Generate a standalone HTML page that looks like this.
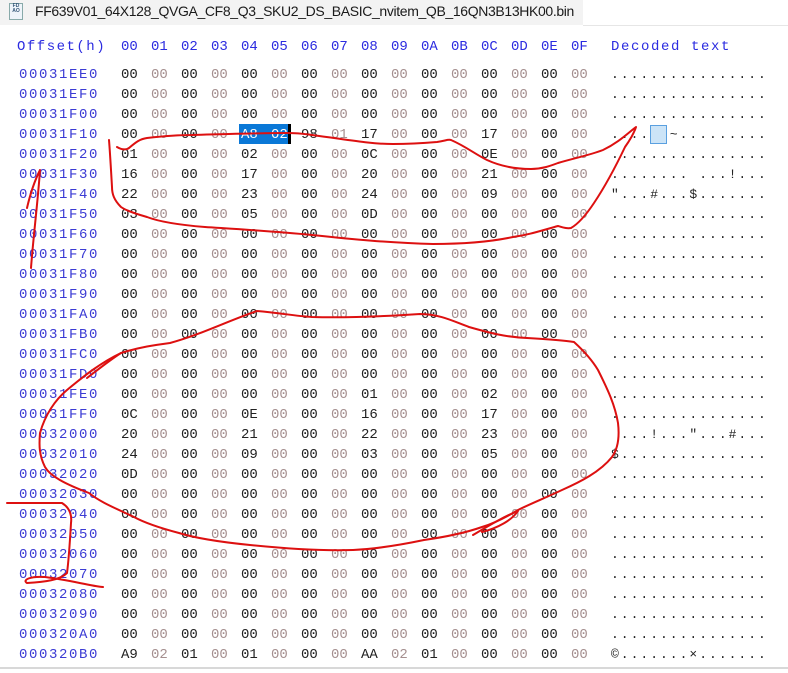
<!DOCTYPE html>
<html><head><meta charset="utf-8">
<style>
body{margin:0;width:788px;height:673px;background:#fff;position:relative;overflow:hidden;font-family:"Liberation Mono",monospace;}
.tab{position:absolute;left:0;top:0;width:583px;height:25px;background:#f3f3f3;}
.tabline{position:absolute;left:583px;top:25px;width:205px;height:1px;background:#e6e6e6;}
.title{position:absolute;left:35px;top:3px;font:14px "Liberation Sans",sans-serif;color:#1a1a1a;white-space:nowrap;letter-spacing:-0.36px;}
.icon{position:absolute;left:9px;top:3px;width:12px;height:15px;border:1px solid #8aa;background:#eef4fa;font:bold 5px "Liberation Sans",sans-serif;color:#357;line-height:5px;text-align:center;}
.hdr,.r{position:absolute;left:0;height:20px;white-space:nowrap;font-size:14px;}
.off{position:absolute;left:19px;color:#3b3bd4;letter-spacing:1.6px;}
.hdr .off{left:17px;color:#2b2be0;letter-spacing:1.5px;}
.h{position:absolute;color:#222;}
.h:nth-child(odd){color:#a58f8f;}
.hdr .h{color:#2b2be0 !important;}
.dec{position:absolute;left:611px;color:#222;letter-spacing:2px;font-size:13px;}
.hdr .dec{color:#2b2be0;letter-spacing:1.6px;font-size:14px;}
.sel{position:absolute;left:239px;top:124px;width:49px;height:20px;background:#0a78d7;}
.cur{position:absolute;left:288px;top:124px;width:3px;height:20px;background:#000;}
.dsel{position:absolute;left:650px;top:125px;width:15px;height:17px;background:#cce4f7;border:1px solid #5aa0e0;}
.bot{position:absolute;left:0;top:667px;width:788px;height:2px;background:#d8d8d8;}
</style></head><body>
<div class="tab"></div><div class="tabline"></div>
<div class="icon">FD<br>AO</div>
<div class="title">FF639V01_64X128_QVGA_CF8_Q3_SKU2_DS_BASIC_nvitem_QB_16QN3B13HK00.bin</div>
<div class="sel"></div><div class="cur"></div><div class="dsel"></div>
<script>
var rows=[
["00031EE0","00 00 00 00 00 00 00 00 00 00 00 00 00 00 00 00","................"],
["00031EF0","00 00 00 00 00 00 00 00 00 00 00 00 00 00 00 00","................"],
["00031F00","00 00 00 00 00 00 00 00 00 00 00 00 00 00 00 00","................"],
["00031F10","00 00 00 00 A8 02 98 01 17 00 00 00 17 00 00 00","....  ~........."],
["00031F20","01 00 00 00 02 00 00 00 0C 00 00 00 0E 00 00 00","................"],
["00031F30","16 00 00 00 17 00 00 00 20 00 00 00 21 00 00 00","........ ...!..."],
["00031F40","22 00 00 00 23 00 00 00 24 00 00 00 09 00 00 00","\"...#...$......."],
["00031F50","03 00 00 00 05 00 00 00 0D 00 00 00 00 00 00 00","................"],
["00031F60","00 00 00 00 00 00 00 00 00 00 00 00 00 00 00 00","................"],
["00031F70","00 00 00 00 00 00 00 00 00 00 00 00 00 00 00 00","................"],
["00031F80","00 00 00 00 00 00 00 00 00 00 00 00 00 00 00 00","................"],
["00031F90","00 00 00 00 00 00 00 00 00 00 00 00 00 00 00 00","................"],
["00031FA0","00 00 00 00 00 00 00 00 00 00 00 00 00 00 00 00","................"],
["00031FB0","00 00 00 00 00 00 00 00 00 00 00 00 00 00 00 00","................"],
["00031FC0","00 00 00 00 00 00 00 00 00 00 00 00 00 00 00 00","................"],
["00031FD0","00 00 00 00 00 00 00 00 00 00 00 00 00 00 00 00","................"],
["00031FE0","00 00 00 00 00 00 00 00 01 00 00 00 02 00 00 00","................"],
["00031FF0","0C 00 00 00 0E 00 00 00 16 00 00 00 17 00 00 00","................"],
["00032000","20 00 00 00 21 00 00 00 22 00 00 00 23 00 00 00"," ...!...\"...#..."],
["00032010","24 00 00 00 09 00 00 00 03 00 00 00 05 00 00 00","$..............."],
["00032020","0D 00 00 00 00 00 00 00 00 00 00 00 00 00 00 00","................"],
["00032030","00 00 00 00 00 00 00 00 00 00 00 00 00 00 00 00","................"],
["00032040","00 00 00 00 00 00 00 00 00 00 00 00 00 00 00 00","................"],
["00032050","00 00 00 00 00 00 00 00 00 00 00 00 00 00 00 00","................"],
["00032060","00 00 00 00 00 00 00 00 00 00 00 00 00 00 00 00","................"],
["00032070","00 00 00 00 00 00 00 00 00 00 00 00 00 00 00 00","................"],
["00032080","00 00 00 00 00 00 00 00 00 00 00 00 00 00 00 00","................"],
["00032090","00 00 00 00 00 00 00 00 00 00 00 00 00 00 00 00","................"],
["000320A0","00 00 00 00 00 00 00 00 00 00 00 00 00 00 00 00","................"],
["000320B0","A9 02 01 00 01 00 00 00 AA 02 01 00 00 00 00 00","©.......×......."]];
</script>
<div class="hdr" style="top:39px"><span class="off">Offset(h)</span><span class="h" style="left:121px">00</span><span class="h" style="left:151px">01</span><span class="h" style="left:181px">02</span><span class="h" style="left:211px">03</span><span class="h" style="left:241px">04</span><span class="h" style="left:271px">05</span><span class="h" style="left:301px">06</span><span class="h" style="left:331px">07</span><span class="h" style="left:361px">08</span><span class="h" style="left:391px">09</span><span class="h" style="left:421px">0A</span><span class="h" style="left:451px">0B</span><span class="h" style="left:481px">0C</span><span class="h" style="left:511px">0D</span><span class="h" style="left:541px">0E</span><span class="h" style="left:571px">0F</span><span class="dec">Decoded text</span></div>
<div id="rows"></div>
<script>
var html="";
for(var i=0;i<rows.length;i++){
 var r=rows[i],hx=r[1].split(" ");
 html+='<div class="r" style="top:'+(67+i*20)+'px"><span class="off">'+r[0]+'</span>';
 for(var j=0;j<16;j++){var st='left:'+(121+j*30)+'px';if(i==3&&(j==4||j==5))st+=';color:#fff';html+='<span class="h" style="'+st+'">'+hx[j]+'</span>';}
 html+='<span class="dec">'+r[2].replace(/&/g,'&amp;').replace(/</g,'&lt;').replace(/ /g,'&nbsp;')+'</span></div>';
}
document.getElementById("rows").innerHTML=html;
</script>
<svg width="788" height="673" style="position:absolute;left:0;top:0" fill="none" stroke="#dd1010" stroke-width="2" stroke-linecap="round" stroke-linejoin="round">
<path d="M117,147 C122,150 126,150 129,148 C136,142 140,139 147,138 C165,136 180,135 192,135 C230,134 260,133 286,133 C300,133 305,134 312,135 C350,140 370,144 393,144 C410,144 425,143 437,142 C445,141 448,139 451,140 C465,146 475,154 487,160 C500,166 515,169 531,169 C542,169 550,166 558,163 C575,158 590,155 603,150 C618,143 628,133 636,127 C634,133 630,140 625,147 C615,168 604,188 594,203 C586,215 578,224 571,228 C566,229 562,227 558,226 C540,231 528,235 513,237 C490,242 460,244 433,244 C390,243 350,239 312,235 C270,231 235,229 205,227 C180,225 160,222 147,217 C133,213 125,210 121,207 C114,200 112,194 112,187 C111,170 110,152 109,140"/>
<path d="M27,208 C30,195 34,182 40,170 C38,200 33,240 31,268"/>
<path d="M257,311 C280,313 295,316 312,317 C350,318 390,316 420,314 C440,314 455,322 469,327 C490,333 505,337 527,338 C545,339 562,340 574,342 C585,352 592,360 598,370 C608,390 615,405 618,423 C620,440 617,450 612,457 C600,472 580,482 562,490 C545,498 530,504 518,510 C505,518 495,523 482,527 C465,533 445,537 424,540 C400,545 375,549 353,550 C315,551 280,548 250,545 C220,542 195,538 179,533 C160,528 145,523 134,517 C115,508 100,502 89,493 C65,484 50,476 45,467 C39,455 39,445 40,433 C45,415 55,400 67,390 C85,375 102,362 121,353 C140,347 155,345 170,343 C200,335 230,320 257,311"/>
<path d="M87,378 C100,368 110,360 121,353"/>
<path d="M473,535 C490,525 505,516 518,511 C512,520 498,528 482,532"/>
<path d="M7,503 C25,503 45,503 62,503 C70,508 72,515 71,523 C70,540 69,558 67,573 C60,580 45,582 27,583 C22,580 30,576 45,577 C70,580 90,586 103,587"/>
</svg>
<div class="bot"></div>
</body></html>
